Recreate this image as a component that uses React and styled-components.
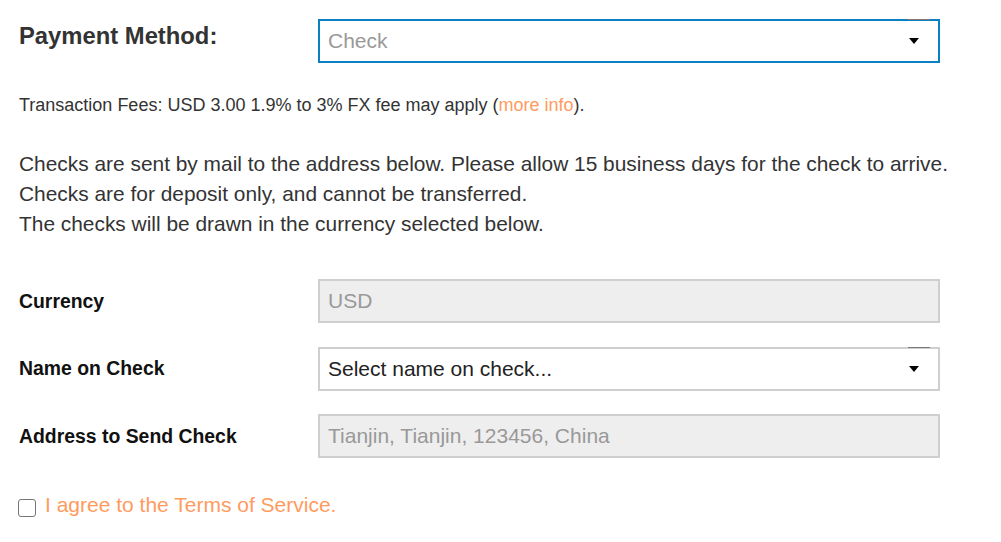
import React from 'react';
import styled, { createGlobalStyle } from 'styled-components';

const GlobalStyle = createGlobalStyle`
  body {
    margin: 0;
    background: #fff;
    font-family: 'Liberation Sans', Arial, sans-serif;
    color: #333;
  }
`;

export default function App() {
  return (
    <>
      <GlobalStyle />
      <Page>
        <MethodRow>
          <MethodLabel>Payment Method:</MethodLabel>
          <SelectBox focused>
            <SelectText muted>Check</SelectText>
            <Caret />
          </SelectBox>
        </MethodRow>

        <Fees>
          Transaction Fees: USD 3.00 1.9% to 3% FX fee may apply (<OrangeLink href="#">more info</OrangeLink>).
        </Fees>

        <Info>
          Checks are sent by mail to the address below. Please allow 15 business days for the check to arrive.
          <br />
          Checks are for deposit only, and cannot be transferred.
          <br />
          The checks will be drawn in the currency selected below.
        </Info>

        <FormGrid>
          <FieldLabel>Currency</FieldLabel>
          <ReadOnlyField>USD</ReadOnlyField>

          <FieldLabel>Name on Check</FieldLabel>
          <SelectBox>
            <SelectText>Select name on check...</SelectText>
            <Caret />
          </SelectBox>

          <FieldLabel>Address to Send Check</FieldLabel>
          <ReadOnlyField>Tianjin, Tianjin, 123456, China</ReadOnlyField>
        </FormGrid>

        <Agree>
          <CheckBox />
          <AgreeText>I agree to the Terms of Service.</AgreeText>
        </Agree>
      </Page>
    </>
  );
}

const Page = styled.div`
  padding: 19px 0 0 19px;
`;

const MethodRow = styled.div`
  display: grid;
  grid-template-columns: 299px 622px;
  align-items: start;
`;

const MethodLabel = styled.h2`
  margin: 0;
  padding-top: 4px;
  font-size: 23.8px;
  font-weight: bold;
  color: #333;
  line-height: 26px;
`;

const SelectBox = styled.div`
  position: relative;
  box-sizing: border-box;
  height: 44px;
  display: flex;
  align-items: center;
  justify-content: space-between;
  padding: 0 19px 0 8px;
  background: #fff;
  border: 2px solid ${(props) => (props.focused ? '#0b80c0' : '#cfcfcf')};

  &::before {
    content: '';
    position: absolute;
    top: -2px;
    right: 8px;
    width: 22px;
    height: 1px;
    background: ${(props) => (props.focused ? '#8a7a70' : '#777')};
  }
`;

const SelectText = styled.span`
  font-size: 21px;
  color: ${(props) => (props.muted ? '#999' : '#222')};
`;

const Caret = styled.span`
  width: 0;
  height: 0;
  border-left: 5.5px solid transparent;
  border-right: 5.5px solid transparent;
  border-top: 6px solid #000;
`;

const Fees = styled.p`
  margin: 32px 0 0;
  font-size: 18px;
  line-height: 20px;
  color: #333;
`;

const OrangeLink = styled.a`
  color: #ff9b5e;
  text-decoration: none;
`;

const Info = styled.p`
  margin: 34px 0 0;
  font-size: 20.9px;
  line-height: 30px;
  color: #333;
  white-space: nowrap;
`;

const FormGrid = styled.div`
  display: grid;
  grid-template-columns: 299px 622px;
  row-gap: 23.5px;
  align-items: center;
  margin-top: 40px;
`;

const FieldLabel = styled.label`
  font-size: 19.4px;
  font-weight: bold;
  color: #111;
`;

const ReadOnlyField = styled.div`
  box-sizing: border-box;
  height: 44px;
  display: flex;
  align-items: center;
  padding: 0 8px;
  background: #eee;
  border: 2px solid #cfcfcf;
  font-size: 21px;
  color: #999;
`;

const Agree = styled.label`
  display: flex;
  align-items: center;
  gap: 9px;
  margin-top: 35px;
  margin-left: -1px;
`;

const CheckBox = styled.span`
  box-sizing: border-box;
  width: 18px;
  height: 18px;
  margin-top: 6px;
  border: 1.5px solid #767676;
  border-radius: 3px;
  background: #fff;
`;

const AgreeText = styled.span`
  font-size: 21px;
  color: #ff9b5e;
`;
